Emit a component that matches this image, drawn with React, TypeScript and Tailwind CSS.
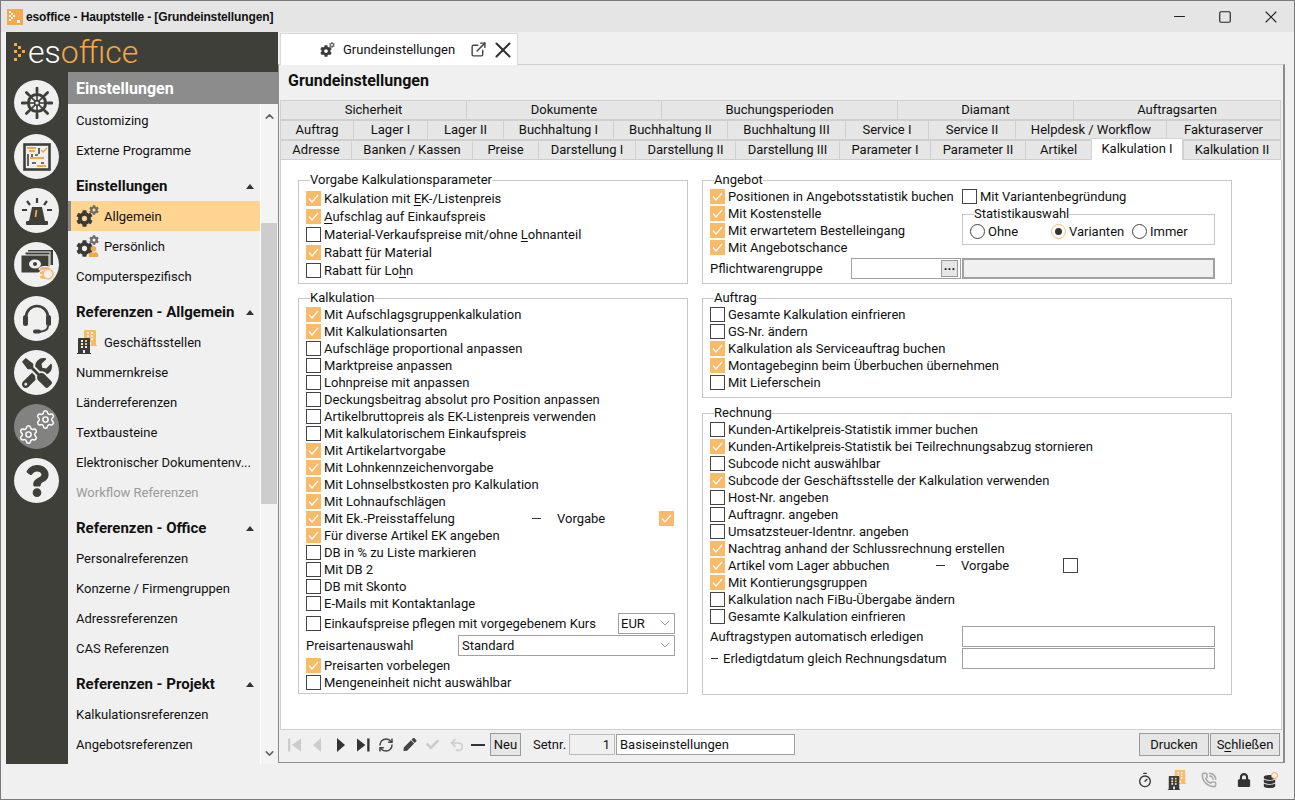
import React from "react";
import { FaCog, FaTools, FaQuestion, FaLock, FaDatabase, FaBuilding, FaPen, FaCheck, FaUser } from "react-icons/fa";
import { Settings, RefreshCw, Undo2, ExternalLink, X, Minus, Square, ChevronDown, ChevronUp, Timer, PhoneCall } from "lucide-react";

const U = ({ c }: { c: string }) => <span className="underline underline-offset-2">{c}</span>;

function Check({ on, className = "" }: { on?: boolean; className?: string }) {
  return on ? (
    <span className={"flex h-[15px] w-[15px] shrink-0 items-center justify-center bg-[#f9bb68] " + className}>
      <svg width="11" height="9" viewBox="0 0 11 9" fill="none" stroke="#fff" strokeWidth="1.2"><path d="M1 4.5 L4 8 L10 1" /></svg>
    </span>
  ) : (
    <span className={"h-[15px] w-[15px] shrink-0 border border-[#444] bg-white " + className} />
  );
}

function Row({ on, children, h = "h-[17px]" }: { on?: boolean; children: React.ReactNode; h?: string }) {
  return (
    <div className={"flex items-center gap-[3px] whitespace-nowrap " + h}>
      <Check on={on} />
      <span>{children}</span>
    </div>
  );
}

function Group({ title, className = "", children }: { title: string; className?: string; children: React.ReactNode }) {
  return (
    <div className={"relative border border-[#c8c8c8] " + className}>
      <span className="absolute left-[11px] top-[-9px] bg-white leading-[16px]">{title}</span>
      {children}
    </div>
  );
}

function Radio({ on, label, w }: { on?: boolean; label: string; w: string }) {
  return (
    <div className={"flex items-center gap-[3px] " + w}>
      <span className={"flex h-[15px] w-[15px] items-center justify-center rounded-full border bg-white " + (on ? "border-[#f9bb68]" : "border-[#444]")}>
        {on && <span className="h-[7px] w-[7px] rounded-full bg-[#333]" />}
      </span>
      <span>{label}</span>
    </div>
  );
}

function Caret() {
  return <svg width="8" height="5" viewBox="0 0 8 5" className="shrink-0"><path d="M0 5 L4 0 L8 5 Z" fill="#333" /></svg>;
}

function Gears({ user }: { user?: boolean }) {
  return (
    <span className="relative block h-[22px] w-[23px] shrink-0">
      <FaCog className="absolute bottom-0 left-0 text-[17px] text-[#3a3a36]" />
      <FaCog className="absolute right-[0px] top-0 text-[10px] text-[#6b6b68]" />
      {user && <FaUser className="absolute bottom-0 right-0 text-[11px] text-[#f0a850]" />}
    </span>
  );
}

function Offices() {
  return (
    <span className="relative block h-[24px] w-[23px] shrink-0">
      <FaBuilding className="absolute right-[1px] top-0 text-[16px] text-[#f9bb68]" />
      <FaBuilding className="absolute bottom-0 left-0 text-[16px] text-[#3a3a36]" />
    </span>
  );
}

function NavItem({ label, icon, active, disabled }: { label: string; icon?: React.ReactNode; active?: boolean; disabled?: boolean }) {
  return (
    <div className={"flex h-[30px] items-center gap-[5px] whitespace-nowrap " + (active ? "border-l-[3px] border-[#8c8c8c] bg-[#ffd591] pl-[5px]" : "pl-[8px]") + (disabled ? " text-[#9a9a9a]" : " text-[#111]")}>
      {icon}
      <span>{label}</span>
    </div>
  );
}

function NavHead({ label }: { label: string }) {
  return (
    <div className="flex h-[36px] items-center justify-between pl-[8px] pr-[6px] pt-[6px] text-[15px] font-bold text-[#111]">
      <span>{label}</span>
      <Caret />
    </div>
  );
}

function RailBtn({ children, dim }: { children: React.ReactNode; dim?: boolean }) {
  return (
    <div className={"flex h-[45px] w-[45px] shrink-0 items-center justify-center rounded-full " + (dim ? "bg-[#828280]" : "bg-[#f0f0f0]")}>
      {children}
    </div>
  );
}

function Wheel() {
  const a = [0, 45, 90, 135, 180, 225, 270, 315];
  return (
    <svg width="32" height="32" viewBox="0 0 32 32" fill="none" stroke="#3f3f3a">
      <circle cx="16" cy="16" r="8.6" strokeWidth="3" />
      <circle cx="16" cy="16" r="2.4" strokeWidth="1.6" />
      {a.map((d) => (
        <g key={d} transform={`rotate(${d} 16 16)`}>
          <path d="M16 13V2" strokeWidth="1.6" />
          <path d="M16 5V1" strokeWidth="2.8" strokeLinecap="round" />
        </g>
      ))}
    </svg>
  );
}

function TabRow({ tabs, active }: { tabs: [string, number][]; active?: string }) {
  return (
    <div className="flex h-[20px]">
      {tabs.map(([t, w]) =>
        t === active ? (
          <div key={t} style={{ width: w }} className="z-10 mt-[-2px] flex h-[22px] items-center justify-center border-x border-t border-[#d4d4d4] bg-white pb-[3px]">{t}</div>
        ) : (
          <div key={t} style={{ width: w }} className="flex items-center justify-center border-l border-b border-t border-[#d0d0d0] bg-[#e6e6e6] pb-[2px] last:border-r">{t}</div>
        )
      )}
    </div>
  );
}

const Field = ({ className = "", children }: { className?: string; children?: React.ReactNode }) => (
  <div className={"flex h-[21px] items-center border border-[#a0a0a0] bg-white " + className}>{children}</div>
);

export default function App() {
  return (
    <div className="flex h-[800px] w-[1295px] flex-col overflow-hidden border border-[#7a7a7a] bg-[#f0f0f0] font-['Roboto',sans-serif] text-[13px] leading-none text-[#111]">
      {/* title bar */}
      <div className="flex h-[31px] shrink-0 items-center bg-[#e5e5e5] pl-[6px]">
        <svg width="16" height="16" viewBox="0 0 16 16" className="shrink-0">
          <rect width="16" height="16" fill="#f5a94e" />
          <g fill="#fff"><rect x="2" y="2" width="2" height="2" /><rect x="4" y="4" width="2" height="2" /><rect x="6" y="6" width="2" height="2" /><rect x="4" y="8" width="2" height="2" /><rect x="2" y="10" width="2" height="2" /><rect x="2" y="6" width="2" height="2" /><rect x="10" y="11" width="3" height="3" /></g>
        </svg>
        <span className="ml-[3px] font-['Liberation_Sans',sans-serif] text-[12px] font-bold tracking-[-0.12px]">esoffice - Hauptstelle - [Grundeinstellungen]</span>
        <div className="ml-auto flex items-center text-[#222]">
          <span className="flex w-[46px] justify-center"><Minus size={17} strokeWidth={1.5} /></span>
          <span className="flex w-[46px] justify-center"><Square size={14} strokeWidth={2} /></span>
          <span className="flex w-[46px] justify-center"><X size={20} strokeWidth={1.3} /></span>
        </div>
      </div>

      {/* body */}
      <div className="flex h-[732px] shrink-0 pl-[5px]">
        {/* left */}
        <div className="flex w-[272px] shrink-0 flex-col bg-[#3f3f3a]">
          <div className="flex h-[40px] shrink-0 items-center pl-[8px]">
            <svg width="12" height="20" viewBox="0 0 12 20" fill="#f0a848" className="shrink-0">
              <rect x="0" y="1" width="3" height="3" /><rect x="4" y="4" width="3" height="3" /><rect x="8" y="8" width="3" height="3" /><rect x="0" y="8" width="3" height="3" /><rect x="4" y="12" width="3" height="3" /><rect x="0" y="16" width="3" height="3" />
            </svg>
            <span className="ml-[2px] mt-[-1px] text-[32px] font-light leading-none text-white">es<span className="text-[#f0a848]">office</span></span>
          </div>
          <div className="flex min-h-0 flex-1">
            <div className="flex w-[62px] shrink-0 flex-col items-center gap-[9px] pr-[1px] pt-[8px]">
              <RailBtn><Wheel /></RailBtn>
              <RailBtn>
                <svg width="28" height="28" viewBox="0 0 28 28" fill="none">
                  <rect x="1.5" y="1.5" width="25" height="25" stroke="#3f3f3a" strokeWidth="2.6" />
                  <path d="M5 11v12M9 11v5M16 5v6M12 12h3M18 20h3M9 20h4" stroke="#3f3f3a" strokeWidth="1.6" />
                  <path d="M4 5h9M6 8h6M7 15h14M14 23h9" stroke="#f0a848" strokeWidth="2" />
                  <path d="M18 7l2 2 4-4" stroke="#f0a848" strokeWidth="1.5" />
                </svg>
              </RailBtn>
              <RailBtn>
                <svg width="34" height="32" viewBox="0 0 34 32" fill="#3f3f3a">
                  <path d="M12 12h10l3 14H9z" /><rect x="6" y="26" width="22" height="4" rx="1" />
                  <path d="M17 3v5M7 6l3 4M27 6l-3 4M2 15h5M27 15h5" stroke="#3f3f3a" strokeWidth="2.2" />
                  <path d="M16.5 15l-1 7" stroke="#f0a848" strokeWidth="1.8" />
                </svg>
              </RailBtn>
              <RailBtn>
                <svg width="36" height="34" viewBox="0 0 36 34">
                  <rect x="9" y="2" width="25" height="15" fill="#3f3f3a" />
                  <rect x="6" y="4" width="25" height="16" fill="#3f3f3a" stroke="#f0f0f0" />
                  <rect x="2" y="7" width="28" height="18" fill="#3f3f3a" stroke="#f0f0f0" />
                  <ellipse cx="16" cy="16" rx="6" ry="4.5" fill="#f0f0f0" /><circle cx="16" cy="16" r="2" fill="#3f3f3a" />
                  <ellipse cx="26" cy="21" rx="6" ry="2.6" fill="#f9bb68" stroke="#fff" /><ellipse cx="26" cy="25" rx="6" ry="2.6" fill="#f9bb68" stroke="#fff" /><ellipse cx="26" cy="29" rx="6" ry="2.6" fill="#f9bb68" stroke="#fff" />
                  <circle cx="29" cy="26" r="5" fill="#f0f0f0" stroke="#f9bb68" strokeWidth="1.5" />
                </svg>
              </RailBtn>
              <RailBtn>
                <svg width="34" height="34" viewBox="0 0 34 34" fill="none" stroke="#3f3f3a">
                  <path d="M6 19V15a11 11 0 0 1 22 0v4" strokeWidth="2.6" />
                  <rect x="3" y="13" width="5" height="11" rx="2.5" fill="#3f3f3a" strokeWidth="0" />
                  <rect x="26" y="13" width="5" height="11" rx="2.5" fill="#3f3f3a" strokeWidth="0" />
                  <path d="M28 24c0 4-3 5-9 6" strokeWidth="2" />
                  <rect x="13" y="27.5" width="8" height="4" rx="2" fill="#3f3f3a" strokeWidth="0" />
                </svg>
              </RailBtn>
              <RailBtn><FaTools className="text-[30px] text-[#3f3f3a]" /></RailBtn>
              <RailBtn dim>
                <span className="relative block h-[36px] w-[38px]">
                  <Settings size={21} strokeWidth={1.7} className="absolute bottom-0 left-0 text-white" />
                  <Settings size={21} strokeWidth={1.7} className="absolute right-0 top-0 text-white" />
                </span>
              </RailBtn>
              <RailBtn><FaQuestion className="text-[32px] text-[#3f3f3a]" /></RailBtn>
            </div>
            <div className="flex min-w-0 flex-1 flex-col">
              <div className="flex h-[32px] shrink-0 items-center bg-[#8c8c8c] pl-[8px] pt-[2px] text-[16px] font-bold text-white">Einstellungen</div>
              <div className="flex min-h-0 flex-1 bg-[#f0f0f0]">
                <div className="w-[192px] shrink-0 overflow-hidden pt-[1px]">
                  <NavItem label="Customizing" />
                  <NavItem label="Externe Programme" />
                  <NavHead label="Einstellungen" />
                  <NavItem label="Allgemein" active icon={<Gears />} />
                  <NavItem label="Persönlich" icon={<Gears user />} />
                  <NavItem label="Computerspezifisch" />
                  <NavHead label="Referenzen - Allgemein" />
                  <NavItem label="Geschäftsstellen" icon={<Offices />} />
                  <NavItem label="Nummernkreise" />
                  <NavItem label="Länderreferenzen" />
                  <NavItem label="Textbausteine" />
                  <NavItem label="Elektronischer Dokumentenv..." />
                  <NavItem label="Workflow Referenzen" disabled />
                  <NavHead label="Referenzen - Office" />
                  <NavItem label="Personalreferenzen" />
                  <NavItem label="Konzerne / Firmengruppen" />
                  <NavItem label="Adressreferenzen" />
                  <NavItem label="CAS Referenzen" />
                  <NavHead label="Referenzen - Projekt" />
                  <NavItem label="Kalkulationsreferenzen" />
                  <NavItem label="Angebotsreferenzen" />
                </div>
                <div className="flex w-[17px] shrink-0 flex-col items-center border-l border-white bg-[#f4f4f4]">
                  <ChevronUp size={13} strokeWidth={3} className="mt-[6px] h-[13px] shrink-0 text-[#666]" />
                  <div className="mt-[100px] h-[281px] w-full shrink-0 bg-[#cdcdcd]" />
                  <ChevronDown size={13} strokeWidth={3} className="mt-auto mb-[4px] text-[#666]" />
                </div>
              </div>
            </div>
          </div>
        </div>

        {/* main */}
        <div className="flex min-w-0 flex-1 flex-col bg-[#f0f0f0]">
          <div className="flex h-[32px] shrink-0 pl-[2px] pt-[1px]">
            <div className="z-10 flex h-[32px] w-[238px] shrink-0 items-center border-x border-t border-[#d8d8d8] bg-white pl-[39px]">
              <span className="relative block h-[15px] w-[15px] shrink-0">
                <FaCog className="absolute bottom-0 left-0 text-[12px] text-[#3a3a36]" />
                <FaCog className="absolute right-0 top-0 text-[6px] text-[#6b6b68]" />
              </span>
              <span className="ml-[8px]">Grundeinstellungen</span>
              <ExternalLink size={17} strokeWidth={2} className="ml-[15px] shrink-0 text-[#444]" />
              <X size={26} strokeWidth={1.9} className="ml-[3px] shrink-0 text-[#333]" />
            </div>
          </div>
          <div className="mb-[1px] mr-[9px] flex min-h-0 flex-1 flex-col border-b border-l border-r-2 border-t border-b-[#8c8c8c] border-l-[#8c8c8c] border-r-[#8c8c8c] border-t-[#d0d0d0]">
            <div className="flex h-[35px] shrink-0 items-center pb-[3px] pl-[9px] text-[16px] font-bold">Grundeinstellungen</div>
            <div className="flex min-h-0 flex-1 flex-col pl-[1px] pr-[2px]">
              <TabRow tabs={[["Sicherheit", 186], ["Dokumente", 195], ["Buchungsperioden", 236], ["Diamant", 176], ["Auftragsarten", 208]]} />
              <TabRow tabs={[["Auftrag", 73], ["Lager I", 74], ["Lager II", 76], ["Buchhaltung I", 110], ["Buchhaltung II", 114], ["Buchhaltung III", 118], ["Service I", 83], ["Service II", 87], ["Helpdesk / Workflow", 151], ["Fakturaserver", 115]]} />
              <TabRow active="Kalkulation I" tabs={[["Adresse", 71], ["Banken / Kassen", 121], ["Preise", 66], ["Darstellung I", 97], ["Darstellung II", 100], ["Darstellung III", 104], ["Parameter I", 91], ["Parameter II", 95], ["Artikel", 66], ["Kalkulation I", 92], ["Kalkulation II", 98]]} />
              <div className="mr-[-1px] flex h-[570px] shrink-0 gap-[14px] border-x border-b border-[#d0d0d0] bg-white pl-[17px] pt-[20px]">
                {/* left col */}
                <div className="flex w-[390px] shrink-0 flex-col gap-[14px]">
                  <Group title="Vorgabe Kalkulationsparameter" className="h-[104px] pl-[7px] pt-[8px]">
                    <Row h="h-[18px]" on>Kalkulation mit <U c="E" />K-/Listenpreis</Row>
                    <Row h="h-[18px]" on><U c="A" />ufschlag auf Einkaufspreis</Row>
                    <Row h="h-[18px]">Material-Verkaufspreise mit/ohne <U c="L" />ohnanteil</Row>
                    <Row h="h-[18px]" on>Rabatt <U c="f" />ür Material</Row>
                    <Row h="h-[18px]">Rabatt für Lo<U c="h" />n</Row>
                  </Group>
                  <Group title="Kalkulation" className="h-[396px] pl-[7px] pr-[12px] pt-[7px]">
                    <Row on>Mit Aufschlagsgruppenkalkulation</Row>
                    <Row on>Mit Kalkulationsarten</Row>
                    <Row>Aufschläge proportional anpassen</Row>
                    <Row>Marktpreise anpassen</Row>
                    <Row>Lohnpreise mit anpassen</Row>
                    <Row>Deckungsbeitrag absolut pro Position anpassen</Row>
                    <Row>Artikelbruttopreis als EK-Listenpreis verwenden</Row>
                    <Row>Mit kalkulatorischem Einkaufspreis</Row>
                    <Row on>Mit Artikelartvorgabe</Row>
                    <Row on>Mit Lohnkennzeichenvorgabe</Row>
                    <Row on>Mit Lohnselbstkosten pro Kalkulation</Row>
                    <Row on>Mit Lohnaufschlägen</Row>
                    <div className="flex h-[17px] items-center whitespace-nowrap">
                      <Check on />
                      <span className="ml-[3px] w-[208px]">Mit Ek.-Preisstaffelung</span>
                      <span className="h-px w-[9px] bg-[#333]" />
                      <span className="ml-[16px] w-[102px]">Vorgabe</span>
                      <Check on />
                    </div>
                    <Row on>Für diverse Artikel EK angeben</Row>
                    <Row>DB in % zu Liste markieren</Row>
                    <Row>Mit DB 2</Row>
                    <Row>DB mit Skonto</Row>
                    <Row>E-Mails mit Kontaktanlage</Row>
                    <div className="flex h-[22px] items-center justify-between whitespace-nowrap">
                      <span className="flex items-center gap-[3px]"><Check /><span>Einkaufspreise pflegen mit vorgegebenem Kurs</span></span>
                      <Field className="w-[57px] justify-between pl-[2px] pr-[1px]"><span>EUR</span><ChevronDown size={16} strokeWidth={1} className="text-[#666]" /></Field>
                    </div>
                    <div className="flex h-[22px] items-center justify-between whitespace-nowrap">
                      <span>Preisartenauswahl</span>
                      <Field className="w-[217px] justify-between pl-[3px] pr-[1px]"><span>Standard</span><ChevronDown size={16} strokeWidth={1} className="text-[#666]" /></Field>
                    </div>
                    <div className="mt-[1px]"><Row on>Preisarten vorbelegen</Row></div>
                    <Row>Mengeneinheit nicht auswählbar</Row>
                  </Group>
                </div>
                {/* right col */}
                <div className="flex w-[530px] shrink-0 flex-col">
                  <Group title="Angebot" className="h-[104px] pl-[7px] pr-[16px] pt-[7px]">
                    <div className="flex">
                      <div className="w-[252px] shrink-0">
                        <Row on>Positionen in Angebotsstatistik buchen</Row>
                        <Row on>Mit Kostenstelle</Row>
                        <Row on>Mit erwartetem Bestelleingang</Row>
                        <Row on>Mit Angebotschance</Row>
                      </div>
                      <div className="min-w-0 flex-1">
                        <Row>Mit Variantenbegründung</Row>
                        <div className="relative mt-[9px] flex h-[31px] items-center border border-[#c8c8c8] pl-[7px] pt-[4px]">
                          <span className="absolute left-[11px] top-[-9px] bg-white leading-[16px]">Statistikauswahl</span>
                          <Radio label="Ohne" w="w-[81px]" />
                          <Radio on label="Varianten" w="w-[81px]" />
                          <Radio label="Immer" w="w-[70px]" />
                        </div>
                      </div>
                    </div>
                    <div className="mt-[1px] flex h-[22px] items-center">
                      <span className="w-[141px] shrink-0">Pflichtwarengruppe</span>
                      <Field className="w-[110px] shrink-0 justify-end pr-[2px]">
                        <span className="flex h-[17px] w-[17px] items-center justify-center border border-[#9a9a9a] bg-[#e6e6e6] pb-[5px] font-bold">...</span>
                      </Field>
                      <Field className="ml-[1px] min-w-0 flex-1 border-2 !bg-[#f0f0f0]" />
                    </div>
                  </Group>
                  <Group title="Auftrag" className="mt-[14px] h-[100px] pl-[7px] pt-[7px]">
                    <Row>Gesamte Kalkulation einfrieren</Row>
                    <Row>GS-Nr. ändern</Row>
                    <Row on>Kalkulation als Serviceauftrag buchen</Row>
                    <Row on>Montagebeginn beim Überbuchen übernehmen</Row>
                    <Row>Mit Lieferschein</Row>
                  </Group>
                  <Group title="Rechnung" className="mt-[15px] h-[282px] pl-[7px] pr-[16px] pt-[7px]">
                    <Row>Kunden-Artikelpreis-Statistik immer buchen</Row>
                    <Row on>Kunden-Artikelpreis-Statistik bei Teilrechnungsabzug stornieren</Row>
                    <Row>Subcode nicht auswählbar</Row>
                    <Row on>Subcode der Geschäftsstelle der Kalkulation verwenden</Row>
                    <Row>Host-Nr. angeben</Row>
                    <Row>Auftragnr. angeben</Row>
                    <Row>Umsatzsteuer-Identnr. angeben</Row>
                    <Row on>Nachtrag anhand der Schlussrechnung erstellen</Row>
                    <div className="flex h-[17px] items-center whitespace-nowrap">
                      <Check on />
                      <span className="ml-[3px] w-[208px]">Artikel vom Lager abbuchen</span>
                      <span className="h-px w-[9px] bg-[#333]" />
                      <span className="ml-[16px] w-[102px]">Vorgabe</span>
                      <Check />
                    </div>
                    <Row on>Mit Kontierungsgruppen</Row>
                    <Row>Kalkulation nach FiBu-Übergabe ändern</Row>
                    <Row>Gesamte Kalkulation einfrieren</Row>
                    <div className="flex h-[22px] items-center justify-between whitespace-nowrap">
                      <span>Auftragstypen automatisch erledigen</span>
                      <Field className="w-[253px]" />
                    </div>
                    <div className="flex h-[22px] items-center justify-between whitespace-nowrap">
                      <span className="flex items-center gap-[5px]"><span className="ml-[1px] h-px w-[7px] bg-[#333]" />Erledigtdatum gleich Rechnungsdatum</span>
                      <Field className="w-[253px]" />
                    </div>
                  </Group>
                </div>
              </div>
              {/* toolbar */}
              <div className="flex h-[29px] shrink-0 items-center pl-[8px] pr-[1px]">
                <svg width="13" height="14" viewBox="0 0 14 14" fill="#ccc" className="shrink-0"><rect x="0" y="0" width="2.5" height="14" /><path d="M14 0v14L4 7z" /></svg>
                <svg width="10" height="14" viewBox="0 0 10 14" fill="#ccc" className="ml-[11px] shrink-0"><path d="M9 0v14L1 7z" /></svg>
                <svg width="10" height="14" viewBox="0 0 10 14" fill="#333" className="ml-[14px] shrink-0"><path d="M1 0v14l8-7z" /></svg>
                <svg width="13" height="14" viewBox="0 0 14 14" fill="#333" className="ml-[11px] shrink-0"><path d="M0 0v14l9-7z" /><rect x="11" y="0" width="2.5" height="14" /></svg>
                <RefreshCw size={16} strokeWidth={2.2} className="ml-[8px] shrink-0 text-[#444]" />
                <FaPen className="ml-[9px] w-[14px] shrink-0 text-[13px] text-[#444]" />
                <FaCheck className="ml-[8px] w-[15px] shrink-0 text-[13px] text-[#ccc]" />
                <Undo2 size={16} strokeWidth={2.5} className="ml-[9px] shrink-0 text-[#ccc]" />
                <span className="ml-[6px] h-[2px] w-[14px] shrink-0 bg-[#333]" />
                <span className="ml-[5px] flex h-[23px] w-[31px] shrink-0 items-center justify-center border border-[#9a9a9a] bg-[#e6e6e6]">Neu</span>
                <span className="ml-[12px] w-[34px] shrink-0">Setnr.</span>
                <Field className="ml-[2px] w-[46px] shrink-0 justify-end border-[#bbb] !bg-[#f0f0f0] pr-[4px]">1</Field>
                <Field className="ml-[1px] w-[179px] shrink-0 pl-[3px]">Basiseinstellungen</Field>
                <span className="ml-auto flex h-[23px] w-[70px] items-center justify-center border border-[#9a9a9a] bg-[#e6e6e6]">Drucken</span>
                <span className="ml-[1px] flex h-[23px] w-[70px] items-center justify-center border border-[#9a9a9a] bg-[#e6e6e6]">S<U c="c" />hließen</span>
              </div>
            </div>
          </div>
        </div>
      </div>

      {/* status */}
      <div className="flex min-h-0 flex-1 items-center justify-end bg-[#f0f0f0] pb-[3px] pr-[17px] text-[#333]">
        <Timer size={16} strokeWidth={2} />
        <span className="relative ml-[14px] block h-[20px] w-[20px]">
          <FaBuilding className="absolute right-0 top-0 text-[14px] text-[#f9bb68]" />
          <FaBuilding className="absolute bottom-0 left-0 text-[14px] text-[#3a3a36]" />
        </span>
        <PhoneCall size={16} strokeWidth={2.4} className="ml-[14px] text-[#aaa]" />
        <FaLock className="ml-[20px] text-[14px]" />
        <span className="relative ml-[12px] block h-[16px] w-[14px]">
          <FaDatabase className="absolute bottom-0 left-0 text-[13px]" />
          <span className="absolute right-[-1px] top-0 h-[7px] w-[7px] rounded-full border border-[#f0a848] bg-[#f0f0f0]" />
        </span>
      </div>
    </div>
  );
}
